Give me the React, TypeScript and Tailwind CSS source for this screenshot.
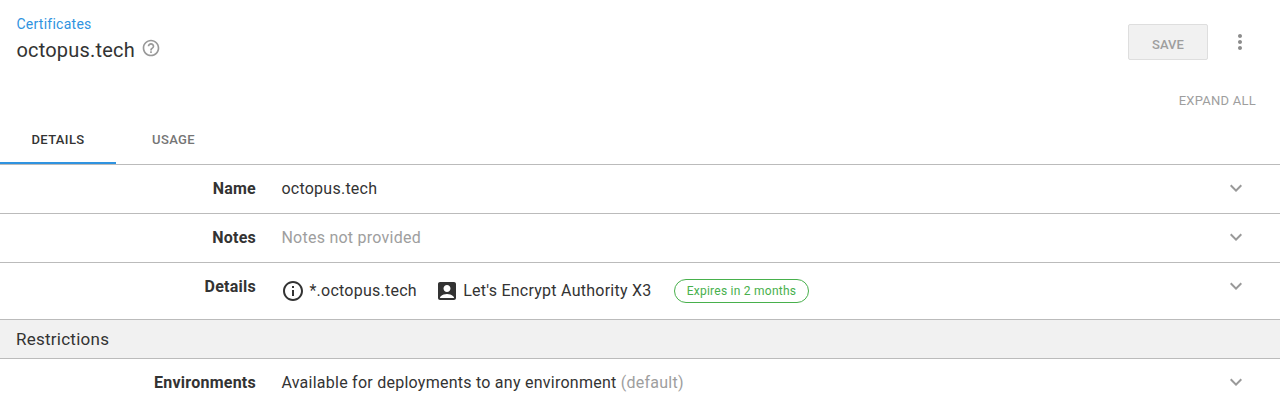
import type { ReactNode } from "react";
import { MdHelpOutline, MdMoreVert, MdExpandMore, MdInfoOutline, MdAccountBox } from "react-icons/md";

function Row({ label, children, tall = false }: { label: string; children: ReactNode; tall?: boolean }) {
  return (
    <div className={`flex border-b border-[#bbbbbb] ${tall ? "h-[57px]" : "h-[49px]"}`}>
      <div className="h-12 w-64 shrink-0 text-right leading-12 font-bold">{label}</div>
      <div className={`ml-[25.4px] flex grow items-center ${tall ? "h-14" : "h-12"}`}>{children}</div>
      <div className="mr-8 flex h-12 w-6 justify-center pt-[11px]">
        <MdExpandMore className="size-6 shrink-0 text-[#999999]" />
      </div>
    </div>
  );
}

export default function App() {
  return (
    <div className="h-[405px] w-[1280px] overflow-hidden bg-white font-[Roboto,sans-serif] text-base tracking-[0.25px] whitespace-nowrap text-[#333333]">
      <header className="flex h-[84px] justify-between">
        <div className="pt-[14px] pl-[16.4px]">
          <div className="h-5 text-sm leading-5 tracking-[0.26px] text-[#2f93e0]">Certificates</div>
          <div className="flex h-8 items-center text-xl leading-8 tracking-[0.2px]">
            octopus.tech
            <MdHelpOutline className="mb-[5px] ml-[6.3px] size-5 text-[#999999]" />
          </div>
        </div>
        <div className="flex pt-6 pr-7">
          <button className="h-9 w-20 rounded-xs border border-[#dedede] bg-[#f1f1f1] pt-[5px] text-[13px] font-medium tracking-[0.1px] text-[#9e9e9e]">SAVE</button>
          <MdMoreVert className="mt-[6px] ml-5 size-6 text-[#8c8c8c]" />
        </div>
      </header>
      <div className="h-8 pt-px pr-6 text-right text-[13px] leading-8 tracking-[0.24px] text-[#9e9e9e]">EXPAND ALL</div>
      <nav className="flex h-[49px] border-b border-[#bbbbbb] text-[13px] leading-12 font-medium tracking-[0.36px]">
        <div className="h-12 w-[116px] border-b-2 border-[#2f93e0] text-center">DETAILS</div>
        <div className="w-[115px] text-center text-[#757575]">USAGE</div>
      </nav>
      <Row label="Name">octopus.tech</Row>
      <Row label="Notes"><span className="text-[#9e9e9e]">Notes not provided</span></Row>
      <Row label="Details" tall>
        <MdInfoOutline className="size-6" />
        <span className="ml-1">*.octopus.tech</span>
        <MdAccountBox className="ml-[18px] size-6" />
        <span className="ml-[4.3px]">Let's Encrypt Authority X3</span>
        <span className="ml-[22px] flex h-6 w-[135px] justify-center rounded-full border border-[#48b04c] pl-px text-xs leading-[22px] text-[#48b04c]">Expires in 2 months</span>
      </Row>
      <div className="h-[39px] border-b border-[#bbbbbb] bg-[#f1f1f1] pl-4 text-[17px] leading-[38px]">Restrictions</div>
      <Row label="Environments">
        Available for deployments to any environment&nbsp;<span className="text-[#9e9e9e]">(default)</span>
      </Row>
    </div>
  );
}
